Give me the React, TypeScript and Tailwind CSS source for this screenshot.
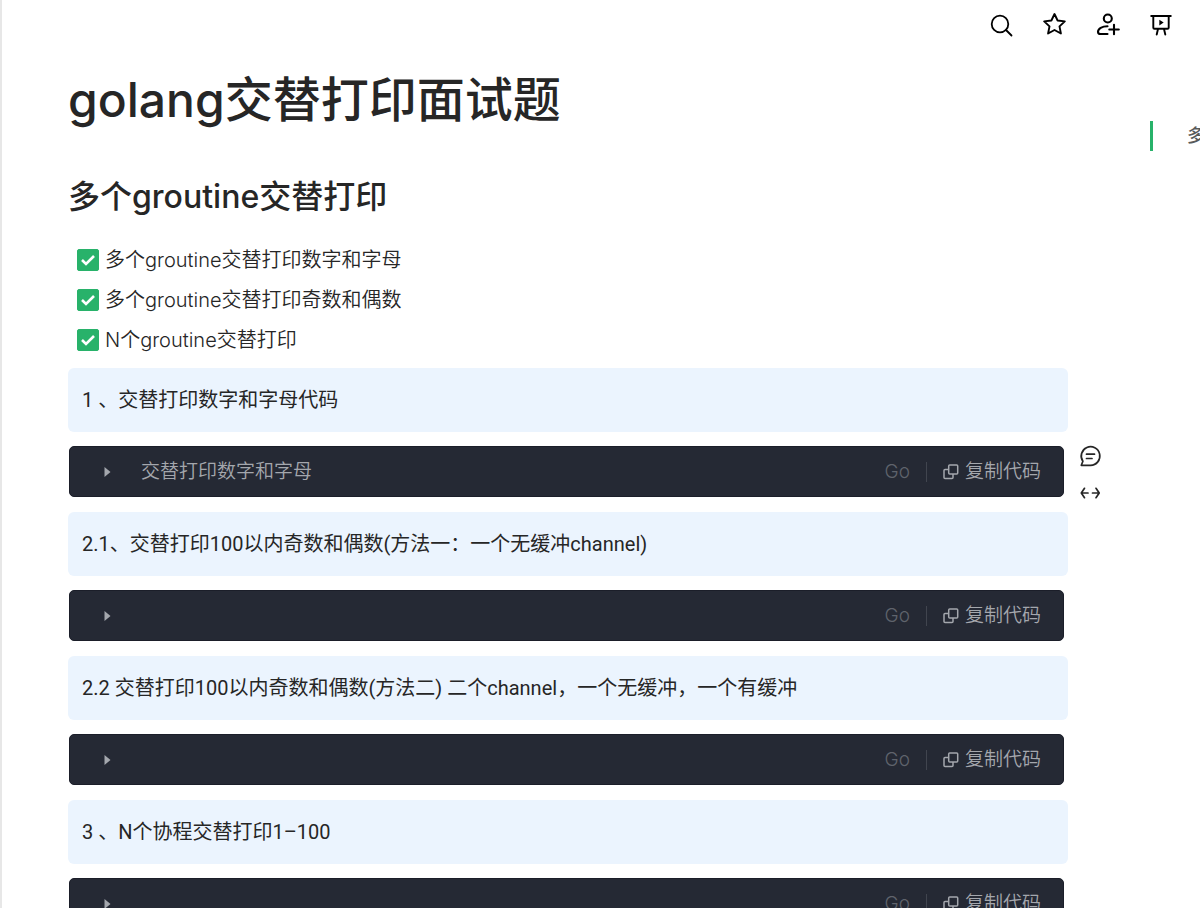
import { useState } from "react";

type CodeSection = {
	title: string;
	codeName: string;
	commented?: boolean;
};

const tasks = [
	"多个groutine交替打印数字和字母",
	"多个groutine交替打印奇数和偶数",
	"N个groutine交替打印",
];

const sections: CodeSection[] = [
	{
		title: "1 、交替打印数字和字母代码",
		codeName: "交替打印数字和字母",
		commented: true,
	},
	{
		title: "2.1、交替打印100以内奇数和偶数(方法一：一个无缓冲channel)",
		codeName: "",
	},
	{
		title: "2.2 交替打印100以内奇数和偶数(方法二) 二个channel，一个无缓冲，一个有缓冲",
		codeName: "",
	},
	{ title: "3 、N个协程交替打印1–100", codeName: "" },
];

const SearchIcon = () => (
	<svg width="24" height="24" viewBox="0 0 24 24" fill="none" stroke="currentColor" strokeWidth="1.8" strokeLinecap="round">
		<circle cx="10" cy="11" r="8.3" />
		<path d="M16 17 21.500 22.500" />
	</svg>
);

const StarIcon = () => (
	<svg width="24" height="24" viewBox="0 0 24 24" fill="none" stroke="currentColor" strokeWidth="1.9" strokeLinejoin="round">
		<path d="m11.500 1 3.100 6.500 7.200.9-5.300 5 1.400 7.100-6.400-3.500-6.400 3.500 1.400-7.100-5.300-5 7.200-.9z" />
	</svg>
);

const AddMemberIcon = () => (
	<svg width="24" height="24" viewBox="0 0 24 24" fill="none" stroke="currentColor" strokeWidth="2.1" strokeLinecap="round">
		<circle cx="11.800" cy="5.500" r="4" />
		<path d="M11.500 13.200C6 13.200 2 15.600 2 18.700c0 1.700.8 2.300 2.500 2.300h7M13.300 16.500h9.500M18 11.700v9.600" />
	</svg>
);

const PresentIcon = () => (
	<svg width="24" height="24" viewBox="0 0 24 24" fill="none" stroke="currentColor" strokeWidth="1.9" strokeLinecap="round">
		<path d="M2.200 3h19.600M4.300 3v11.700c0 .7.400 1.100 1.100 1.100h13.200c.7 0 1.100-.4 1.100-1.100V3M9 16l-1.300 5.500M15 16l1.300 5.500" />
		<path d="M10.300 6.700v5.800l4.400-2.900z" fill="currentColor" stroke="none" />
	</svg>
);

const CommentIcon = () => (
	<svg width="24" height="24" viewBox="0 0 24 24" fill="none" stroke="currentColor" strokeWidth="1.7" strokeLinecap="round" strokeLinejoin="round">
		<path d="M3.300 21.300h9.300a9.300 9.300 0 1 0-7.700-4z" />
		<path d="M8.500 10.200h8M8.500 14.500h5.500" />
	</svg>
);

const WidthIcon = () => (
	<svg width="24" height="24" viewBox="0 0 24 24" fill="none" stroke="currentColor" strokeWidth="1.7" strokeLinecap="round" strokeLinejoin="round">
		<path d="M6.500 7.300 3.300 12l3.200 4.700M3.500 12H10M18 7.300l3.200 4.700-3.200 4.700M21 12h-6.500" />
	</svg>
);

const CopyIcon = () => (
	<svg width="16" height="16" viewBox="0 0 16 16" fill="none" stroke="currentColor" strokeWidth="1.5" strokeLinejoin="round">
		<rect x="5.700" y="1" width="9" height="9" rx="1" />
		<path d="M5.700 5.500H2c-.6 0-1 .4-1 1V13.500c0 .6.400 1 1 1h7c.6 0 1-.4 1-1V10" />
	</svg>
);

const Toolbar = () => (
	<header className="flex h-[50px] items-center justify-end gap-[29px] pr-[27px] text-black">
		<button type="button" aria-label="搜索"><SearchIcon /></button>
		<button type="button" aria-label="收藏"><StarIcon /></button>
		<button type="button" aria-label="添加成员"><AddMemberIcon /></button>
		<button type="button" aria-label="演示"><PresentIcon /></button>
	</header>
);

const Task = ({ label }: { label: string }) => {
	const [done, setDone] = useState(true);

	return (
		<li>
			<label className="flex h-10 items-center gap-[6px] pl-[9px] text-xl font-[350]">
				<span className="grid size-[22px] place-items-center">
					<input
						type="checkbox"
						checked={done}
						onChange={() => setDone(!done)}
						className="col-start-1 row-start-1 size-[22px] appearance-none rounded-[2px] border border-[#28b26a] checked:bg-[#28b26a]"
					/>
					{done && (
						<svg className="pointer-events-none col-start-1 row-start-1" width="14" height="14" viewBox="0 0 14 14" fill="none" stroke="white" strokeWidth="2.6">
							<path d="m1 7 4 4L13 3" />
						</svg>
					)}
				</span>
				{label}
			</label>
		</li>
	);
};

const CodeBar = ({ name }: { name: string }) => {
	const [open, setOpen] = useState(false);

	return (
		<div className="ml-px mr-1 flex flex-1 items-center rounded-[5px] border border-[#1b1e29] bg-[#252934] pt-px pl-[34px] pr-[22px] text-[19px] font-[350] text-[#a4a7ad]">
			<button type="button" aria-label="展开代码" aria-expanded={open} onClick={() => setOpen(!open)}>
				<svg width="7" height="10" viewBox="0 0 7 10" fill="currentColor">
					<path d="M.5 0 6.500 5 .5 10z" />
				</svg>
			</button>
			<span className="flex-1 pl-[30px]">{name}</span>
			<span className="text-[#5f636c]">Go</span>
			<span className="mx-4 h-5 w-px bg-[#41454f]" />
			<button type="button" className="flex items-center gap-[6px]">
				<CopyIcon />
				复制代码
			</button>
		</div>
	);
};

export default function App() {
	return (
		<div className="h-screen overflow-hidden border-l-2 border-[#e7e7e7] bg-white font-[Inter,'Noto_Sans_CJK_SC',sans-serif] text-[#262626]">
			<Toolbar />
			<main className="pl-[66px]">
				<div className="flex pt-[14px]">
					<h1 className="flex-1 pb-[15px] text-5xl/[72px] font-medium">golang交替打印面试题</h1>
					<nav className="w-[50px] self-end overflow-hidden">
						<a href="#groutine" className="block h-[30px] whitespace-nowrap border-l-[3px] border-[#28b26a] pl-[34px] text-lg/[30px] font-medium text-[#585a5a]">
							多个groutine交替打印
						</a>
					</nav>
				</div>
				<h2 id="groutine" className="pt-[22px] text-[32px]/[48px] font-medium">多个groutine交替打印</h2>
				<ul className="pt-[19px] pb-2">
					{tasks.map((task) => (
						<Task key={task} label={task} />
					))}
				</ul>
				{sections.map((section) => (
					<section key={section.title} className="mb-[15px]">
						<p className="mr-[132px] flex h-16 items-center rounded-md bg-[#ebf4fe] px-[14px] font-[Roboto,'Noto_Sans_CJK_SC',sans-serif] text-xl">
							{section.title}
						</p>
						<div className="mt-[14px] flex h-[51px]">
							<CodeBar name={section.codeName} />
							<div className="-mt-[2px] flex w-[132px] flex-col items-start gap-[13px] pl-[10px]">
								{section.commented && (
									<>
										<button type="button" aria-label="评论"><CommentIcon /></button>
										<button type="button" aria-label="调整宽度"><WidthIcon /></button>
									</>
								)}
							</div>
						</div>
					</section>
				))}
			</main>
		</div>
	);
}
